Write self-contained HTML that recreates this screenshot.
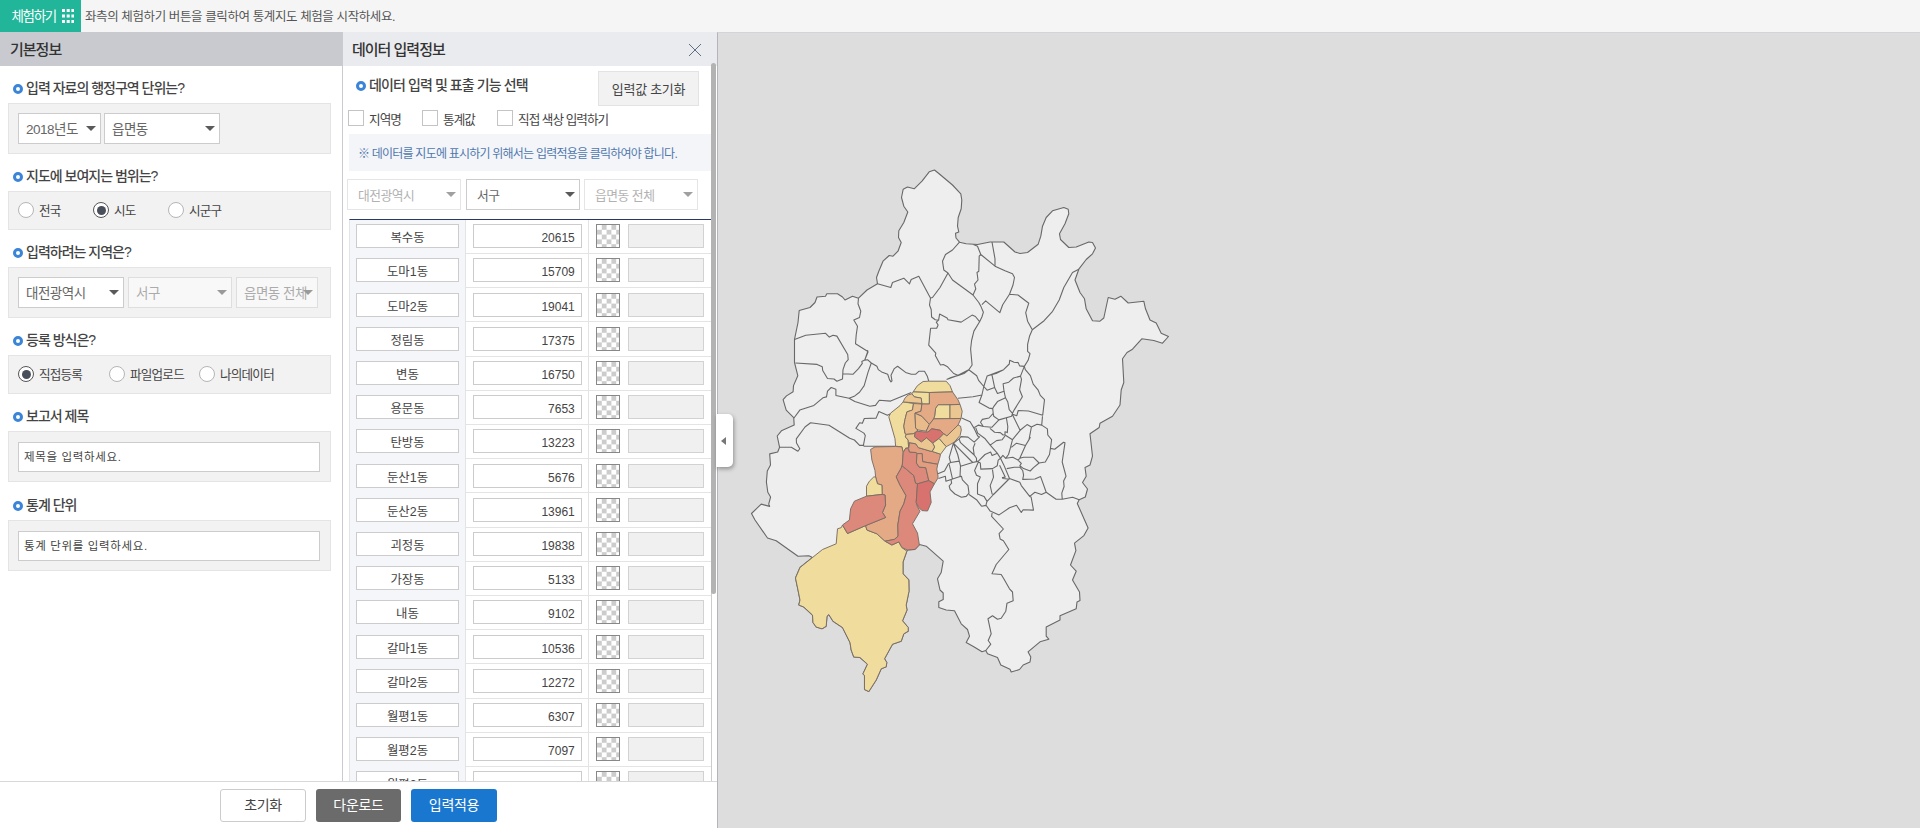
<!DOCTYPE html>
<html lang="ko">
<head>
<meta charset="utf-8">
<title>통계지도 체험</title>
<style>
*{box-sizing:border-box;margin:0;padding:0}
html,body{width:1920px;height:828px;overflow:hidden;background:#dddddd;font-family:"Liberation Sans","Noto Sans CJK KR",sans-serif;color:#333;font-size:12px}
#top{position:absolute;left:0;top:0;width:1920px;height:32px;background:#f5f5f5}
#top .btn{position:absolute;left:0;top:0;width:81px;height:32px;background:#21b69a;color:#fff;font-size:13.5px;line-height:34px;padding-left:11.5px;letter-spacing:-1.3px}
#top .grid{position:absolute;left:62px;top:9px;width:12px;height:14px}
#top .msg{position:absolute;left:85px;top:0;line-height:35px;font-size:12.5px;color:#555;letter-spacing:-0.4px}
#left{position:absolute;left:0;top:32px;width:343px;height:796px;background:#fff;border-right:1px solid #c9cbd0}
#left h2{height:34px;background:#c8cad0;font-size:15px;font-weight:500;line-height:35px;padding-left:10px;color:#333;letter-spacing:-1px}
.sec{position:absolute;left:0;width:342px}
.sec .tt{position:absolute;left:13px;top:0;font-size:14px;font-weight:500;color:#444;letter-spacing:-1px;white-space:nowrap;line-height:20px;padding-left:13px}
.sec .tt:before{content:"";position:absolute;left:0;top:6px;width:10px;height:10px;border:3px solid #3b84d8;border-radius:50%}
.box{position:absolute;left:8px;width:323px;background:#f2f2f2;border:1px solid #e4e4e4}
.sel{position:absolute;height:31px;background:#fff;border:1px solid #ccc;font-size:13.5px;color:#666;line-height:31px;padding-left:7px;white-space:nowrap;letter-spacing:-0.5px}
.sel:after{content:"";position:absolute;right:4.5px;top:12px;border-left:5px solid transparent;border-right:5px solid transparent;border-top:5.5px solid #5a5a5a}
.sel.dis{opacity:.5}
.sel.dis:after{border-top-color:#444}
.rad{position:absolute;font-size:12.6px;color:#444;line-height:19px;padding-left:21px;white-space:nowrap;letter-spacing:-0.8px}
.rad:before{content:"";position:absolute;left:0;top:0;width:16px;height:16px;border:1px solid #b5b5b5;border-radius:50%;background:#fff}
.rad.on:before{border-color:#555}
.rad.on:after{content:"";position:absolute;left:3.5px;top:3.5px;width:9px;height:9px;border-radius:50%;background:#4a4f5c}
.inp{position:absolute;left:9px;top:10px;width:302px;height:30px;background:#fff;border:1px solid #ccc;font-size:11.5px;color:#444;line-height:29px;padding-left:5px;letter-spacing:0.65px}
#foot{position:absolute;left:0;top:781px;width:717px;height:47px;background:#fff;border-top:1px solid #d6d8dc}
.fb{position:absolute;top:7.3px;height:33px;border-radius:3px;font-size:14px;line-height:33.5px;text-align:center;letter-spacing:-0.3px}
#data{position:absolute;left:343px;top:32px;width:374px;height:749px;background:#fff;overflow:hidden}
#map{position:absolute;left:717px;top:32px;width:1203px;height:796px;background:#dddddd;border-left:1px solid #b4b4bc;border-top:1px solid #d2d4da}

*:before,*:after{box-sizing:border-box}
#data .hd{position:absolute;left:0;top:0;width:374px;height:34px;background:#eaebef;font-size:15px;font-weight:500;line-height:35px;padding-left:9px;letter-spacing:-1px;color:#333}
#data .x{position:absolute;left:345px;top:11px;width:14px;height:14px}
#data .sb{position:absolute;left:368px;top:31px;width:5px;height:531px;background:#b3b3b3;border-radius:2.5px}
#data .tt{position:absolute;left:13px;top:43px;font-size:14px;font-weight:500;color:#444;letter-spacing:-0.9px;white-space:nowrap;line-height:20px;padding-left:13px}
#data .tt:before{content:"";position:absolute;left:0;top:6px;width:10px;height:10px;border:3px solid #3b84d8;border-radius:50%}
#data .rst{position:absolute;left:255px;top:39px;width:101px;height:35px;background:#f2f2f2;border:1px solid #e3e3e3;font-size:13px;line-height:36.5px;text-align:center;color:#444;letter-spacing:-0.3px}
.chk{position:absolute;top:78px;font-size:12.6px;line-height:20px;padding-left:21px;color:#444;white-space:nowrap;letter-spacing:-0.95px}
.chk:before{content:"";position:absolute;left:0;top:0;width:16px;height:16px;border:1px solid #c4c4c4;background:#fff}
#data .note{position:absolute;left:6px;top:102px;width:362px;height:37px;background:#f4f5f9;font-size:12px;line-height:40px;padding-left:9px;color:#4f78ad;letter-spacing:-0.78px;white-space:nowrap}
#data .tb{position:absolute;left:6px;top:187px;width:363px;height:600px;border-top:1px solid #2a3a66;border-left:1px solid #e4e4e4;border-right:1px solid #ccc}
.row{position:absolute;left:6px;width:362px;height:34.2px;border-bottom:1px solid #e4e4e4}
.row .c1{position:absolute;left:0;top:0;width:117.4px;height:34.2px;background:#f5f6f9;border-right:1px solid #e4e4e4;border-left:1px solid #e4e4e4}
.row .nm{position:absolute;left:6px;top:4.4px;width:103px;height:24px;background:#fff;border:1px solid #ccc;font-size:12.4px;line-height:26px;text-align:center;color:#444}
.row .vl{position:absolute;left:124.3px;top:4.4px;width:108.5px;height:24px;background:#fff;border:1px solid #ccc;font-size:12px;line-height:26px;text-align:right;padding-right:6px;color:#444}
.row:after{content:"";position:absolute;left:239px;top:0;width:1px;height:34.2px;background:#e4e4e4}
.row .sw{position:absolute;left:247px;top:4.4px;width:24px;height:24px;border:1px solid #888;background:repeating-conic-gradient(#ccc 0% 25%,#fff 0% 50%) 0 0/9.6px 9.6px}
.row .cl{position:absolute;left:279px;top:4.4px;width:76px;height:24px;background:#f0f0f0;border:1px solid #d2d2d2}
#hand{position:absolute;left:716px;top:414px;width:17px;height:53px;background:#fff;border-radius:0 5px 5px 0;box-shadow:1px 2px 4px rgba(0,0,0,.35)}
#hand:after{content:"";position:absolute;left:5px;top:23px;border-top:4px solid transparent;border-bottom:4px solid transparent;border-right:5px solid #777}
</style>
</head>
<body>
<div id="map"></div>
<!--MAP--><svg id="mapsvg" width="1920" height="828" viewBox="0 0 1920 828" style="position:absolute;left:0;top:0">
<path d="M934.5 170.0 L940.0 174.5 L952.5 185.0 L960.8 193.8 L961.8 200.0 L961.2 208.8 L958.2 217.5 L957.5 226.2 L958.8 232.0 L955.5 233.2 L956.0 238.0 L959.5 242.2 L966.2 243.8 L977.5 244.5 L990.0 242.0 L1003.8 242.0 L1010.0 247.5 L1015.0 252.0 L1020.0 253.5 L1027.5 252.5 L1038.2 244.2 L1040.8 236.2 L1042.5 226.2 L1046.2 217.5 L1052.5 210.8 L1063.8 207.5 L1068.2 209.2 L1068.8 213.8 L1065.0 223.8 L1059.5 233.8 L1060.5 239.5 L1068.8 247.5 L1076.2 247.0 L1088.8 242.0 L1092.5 242.5 L1095.5 248.0 L1092.5 253.8 L1086.2 259.5 L1078.8 269.2 L1075.0 280.0 L1080.0 292.5 L1084.5 298.8 L1086.2 308.8 L1092.5 320.8 L1100.0 321.2 L1103.8 318.0 L1108.2 297.5 L1115.0 299.2 L1120.8 296.2 L1128.2 303.0 L1143.8 301.2 L1145.5 308.8 L1150.0 320.0 L1156.2 323.0 L1161.2 333.2 L1168.5 336.5 L1162.5 343.2 L1153.8 340.5 L1141.8 338.8 L1132.5 349.2 L1127.0 352.5 L1122.5 358.8 L1123.8 382.5 L1121.2 390.0 L1120.0 405.0 L1112.5 416.2 L1100.0 423.2 L1099.2 427.5 L1090.0 433.8 L1092.5 456.2 L1090.0 465.0 L1085.0 467.5 L1086.2 476.2 L1082.5 482.5 L1087.5 489.0 L1085.3 497.0 L1079.2 499.8 L1077.3 503.5 L1088.1 528.0 L1083.9 535.6 L1074.5 543.1 L1075.9 550.6 L1070.5 565.0 L1076.2 571.2 L1072.5 580.0 L1079.5 592.0 L1080.0 600.5 L1077.0 602.0 L1076.2 608.8 L1060.0 615.8 L1060.0 620.0 L1046.2 627.0 L1046.2 636.2 L1048.8 639.2 L1040.0 641.8 L1028.0 651.8 L1030.8 657.0 L1030.0 662.0 L1023.2 665.0 L1019.5 669.5 L1011.2 672.0 L1010.0 669.2 L1000.8 665.0 L997.5 657.5 L987.5 653.8 L985.8 650.5 L982.0 651.8 L973.8 646.8 L966.2 642.5 L969.5 636.2 L967.5 629.5 L961.2 623.8 L954.5 610.8 L946.2 610.0 L938.8 607.5 L938.8 601.8 L943.2 599.5 L943.2 593.0 L940.0 590.0 L937.5 578.8 L941.2 572.5 L943.2 561.2 L926.2 546.2 L919.5 544.5 L915.0 549.4 L907.5 550.0 L906.8 551.2 L903.0 562.0 L903.0 573.8 L908.8 580.0 L909.0 591.2 L906.2 605.0 L907.0 610.0 L902.5 620.8 L908.2 627.5 L908.2 631.2 L903.8 633.8 L901.2 641.2 L892.5 644.2 L884.5 658.8 L886.8 662.5 L886.2 666.8 L881.2 668.8 L876.2 680.0 L868.8 691.5 L864.5 689.5 L864.5 675.5 L863.0 673.8 L867.5 664.2 L860.0 657.5 L853.8 657.0 L851.2 650.0 L850.0 642.5 L842.5 627.5 L833.0 621.2 L828.8 614.5 L827.0 616.2 L826.2 626.2 L822.0 628.8 L816.2 627.0 L813.0 622.5 L812.5 615.0 L803.8 607.0 L798.8 605.0 L800.0 600.0 L798.0 590.0 L795.5 578.0 L800.0 567.5 L812.5 557.5 L808.8 555.8 L798.0 556.2 L776.2 540.8 L767.5 538.0 L755.0 520.0 L751.5 513.5 L761.2 504.1 L769.7 506.4 L768.7 504.1 L770.6 497.0 L767.8 492.3 L766.4 482.0 L767.3 471.0 L770.5 465.0 L769.7 453.9 L777.7 452.0 L779.6 447.3 L777.2 436.0 L781.4 430.8 L794.2 425.1 L793.7 417.6 L786.2 410.1 L783.1 399.7 L786.5 395.9 L793.1 391.7 L793.5 385.6 L797.8 375.7 L794.5 362.5 L794.5 339.4 L798.0 322.5 L799.2 310.5 L810.0 307.5 L815.0 302.5 L817.0 297.0 L825.5 296.2 L826.8 293.8 L837.5 293.8 L842.5 297.0 L845.0 300.0 L852.5 296.2 L858.5 298.2 L867.0 290.0 L877.5 283.8 L876.5 277.5 L878.8 271.2 L883.0 261.2 L889.2 255.5 L893.0 256.2 L898.0 251.2 L901.2 242.5 L898.5 237.5 L898.8 230.8 L903.8 222.5 L907.8 212.0 L903.8 206.2 L901.5 197.5 L903.2 189.2 L907.5 187.0 L914.2 188.8 L922.0 181.2 L929.2 171.8 Z" fill="#eeeeee" stroke="#686868" stroke-width="1.1" stroke-linejoin="round"/>
<path d="M959.5 242.2 L952.5 250.0 L945.5 254.5 L942.5 261.2 L943.8 270.0 L948.0 273.0 L940.0 287.5 L932.5 297.5 L930.5 298.0 M877.5 283.8 L890.8 287.5 L892.5 282.5 L903.8 278.2 L909.5 283.8 L911.2 279.5 L918.8 276.2 L928.8 295.0 L930.5 298.0 M948.0 273.0 L952.5 280.0 L966.2 290.0 L973.0 295.0 L978.8 302.5 L981.0 306.6 L983.4 312.2 L981.9 317.0 L979.6 321.7 L973.9 331.1 L971.6 340.5 L970.6 349.0 L972.1 365.0 L968.8 369.7 L964.0 373.5 L958.4 375.4 L951.0 377.5 L946.6 379.4 M973.5 244.5 L977.5 246.2 L980.8 254.5 L979.2 256.2 L978.8 271.2 L977.0 272.5 L978.0 280.0 L974.5 284.2 L975.8 288.8 L973.0 295.0 M980.8 254.5 L995.0 266.2 L1005.0 270.8 L1012.5 273.8 L1014.5 277.5 L1013.0 285.0 L1009.5 294.2 L1002.7 304.7 L999.8 312.7 L985.7 300.9 L981.9 304.7 M992.0 242.0 L995.0 258.8 L995.0 266.2 M1009.5 294.2 L1018.0 295.0 L1028.8 303.2 L1025.7 312.7 L1027.6 321.2 L1032.3 329.7 L1029.5 336.3 L1027.6 344.3 L1027.6 351.3 L1030.0 353.7 L1028.1 360.3 L1024.3 366.4 L1019.6 365.9 L1018.2 362.6 L1014.0 362.2 L1009.7 360.3 L1009.3 364.0 L1003.6 369.7 L996.1 373.5 L990.4 374.9 L987.1 376.1 M1032.3 329.7 L1044.1 320.7 L1052.6 311.3 L1059.2 300.0 L1063.8 287.5 L1072.5 272.5 L1078.8 269.2 M858.5 298.2 L858.0 303.8 L860.8 311.2 L859.5 317.5 L853.8 320.0 L857.5 326.2 L856.2 335.0 L855.5 343.8 L867.5 351.2 L867.5 352.1 L864.7 360.1 M930.5 298.0 L929.5 305.0 L931.2 309.5 L931.6 317.0 L935.3 319.8 L938.6 320.2 L939.6 314.1 L947.1 317.9 L948.0 319.8 L961.2 322.1 L972.1 315.1 L975.4 316.5 L979.6 321.7 M938.6 320.2 L936.3 322.1 L938.1 325.0 L936.7 328.3 L930.6 328.3 L928.7 345.2 L935.8 353.2 L935.3 355.6 L940.5 365.0 L943.3 364.5 L947.1 366.4 L953.7 373.5 L958.4 375.4 M794.5 339.4 L805.8 335.2 L825.6 333.3 L829.3 337.1 L833.1 335.2 L836.9 336.1 L847.7 354.5 L848.2 359.7 L845.3 363.0 L843.0 369.6 L842.5 379.0 L836.9 381.3 L834.0 379.0 L827.5 378.5 L822.7 370.5 L822.3 366.7 L817.1 364.4 L795.4 363.0 M843.0 373.8 L852.9 374.3 L858.5 368.6 L862.3 363.4 L861.8 361.6 L864.7 360.1 L868.0 352.1 L867.5 350.2 M864.7 360.1 L867.5 359.7 L871.3 363.0 L876.9 366.3 L878.3 369.6 L881.6 371.9 L887.7 374.3 L889.6 379.9 L891.0 381.8 L892.0 380.9 L891.0 375.2 L894.3 368.6 L897.6 366.3 L905.6 372.4 L911.3 374.3 L915.5 374.3 L918.8 371.3 L924.5 371.3 L927.3 376.2 L928.7 381.0 M871.3 363.0 L868.0 372.4 L864.2 385.6 L859.5 392.2 L854.8 395.9 L849.1 398.3 M794.0 418.0 L799.8 410.1 L813.9 405.4 L822.9 397.8 L826.5 396.9 L827.5 391.2 L831.2 387.5 L835.9 389.3 L835.9 395.5 L849.1 398.3 L854.8 401.6 L869.8 406.3 L875.5 405.4 L879.3 400.2 L890.6 401.1 L911.3 392.6 M779.6 447.3 L791.3 447.3 L797.9 451.3 L799.8 448.7 L796.5 443.0 L796.3 438.8 L805.0 427.0 L810.6 422.8 L829.0 425.3 L849.7 438.3 L854.4 440.0 L859.6 445.4 L863.4 445.4 L864.3 446.3 L895.4 446.3 M863.4 445.4 L865.3 435.5 L863.9 433.1 L855.9 428.4 L859.6 422.8 L862.4 423.3 L864.3 418.5 L876.1 418.1 L878.9 411.5 L887.4 415.2 L890.0 414.0 M946.6 379.4 L957.0 375.7 L968.8 369.7 M968.8 369.7 L976.7 375.7 L978.6 380.4 L983.8 386.5 L981.9 395.0 L979.1 402.5 L989.0 408.1 L992.7 408.6 L993.2 413.3 L993.7 416.2 L998.9 419.9 L991.8 427.3 L983.3 426.5 L980.5 422.3 L982.4 419.4 L989.0 418.0 L993.2 413.3 M957.9 398.3 L973.0 396.8 L981.9 395.0 M983.8 386.5 L987.1 376.1 L991.8 374.2 L1003.6 369.7 M991.8 374.2 L994.6 387.4 L987.1 390.2 L983.8 386.5 M994.6 387.4 L997.5 393.5 L1004.0 391.2 L1003.1 383.7 L1008.8 382.2 L1013.5 378.0 L1020.5 376.1 L1024.3 366.4 M1004.0 391.2 L1005.5 397.8 L997.5 401.6 L993.7 406.7 L992.7 408.6 M1005.5 397.8 L1007.8 402.0 L1009.2 409.6 L1012.5 413.3 L1011.6 416.2 L998.9 419.9 M1020.5 376.1 L1021.5 379.4 L1019.6 389.8 L1022.4 396.8 L1014.4 409.6 L1012.5 413.3 M1024.3 366.4 L1025.3 369.7 L1030.4 375.7 L1033.2 384.1 L1038.0 389.8 L1040.3 395.4 L1044.5 399.7 L1042.7 415.2 L1028.5 411.0 L1018.2 410.5 L1016.8 415.7 L1012.5 414.2 M1042.5 416.2 L1041.7 425.1 L1047.4 428.9 L1047.8 435.0 L1051.6 439.7 L1050.9 445.0 L1049.5 454.5 L1045.3 462.0 L1039.1 463.0 M1041.7 425.1 L1037.0 424.2 L1031.4 427.0 L1027.1 424.6 L1020.1 430.3 L1012.5 439.7 L1010.4 447.9 L1008.5 454.5 L1005.7 458.3 L1002.9 455.4 L1000.5 458.3 M1012.5 414.7 L1020.1 430.3 M1006.4 418.0 L1007.8 426.5 L1007.3 432.6 L1005.0 431.7 L1005.0 435.0 L1012.5 439.7 M1031.4 427.0 L1029.0 439.7 L1025.5 445.5 L1016.5 443.2 L1011.4 447.4 M961.7 418.0 L970.1 421.8 L974.4 428.9 L977.7 435.9 L979.6 436.9 L974.2 442.2 L968.0 437.1 L961.0 436.6 L959.1 438.9 L953.4 443.2 M974.4 427.5 L978.6 425.1 L983.3 426.5 M975.8 427.9 L977.7 433.1 L985.2 438.8 L990.2 445.1 L997.2 453.1 L1000.5 458.3 L1003.8 464.9 L1009.5 478.5 L993.5 494.5 L986.9 501.6 L985.9 505.4 L981.7 506.3 M989.9 428.4 L994.6 432.2 L1000.3 432.6 L1003.1 435.0 L1005.0 435.0 M1005.0 436.0 L1002.2 439.7 L996.5 440.6 L990.2 445.1 M953.4 443.2 L949.2 457.3 L950.6 462.5 L948.3 463.9 L944.5 471.0 L937.9 473.8 M953.4 443.2 L957.7 454.5 L960.5 465.8 L960.0 476.6 L945.9 481.3 L945.4 476.2 L938.4 478.5 M950.6 462.5 L959.1 461.1 M949.2 464.4 L952.5 479.0 M953.4 443.2 L972.7 462.5 L976.5 461.6 L976.5 458.3 L974.2 455.0 L973.2 447.9 L975.1 443.2 M959.1 438.9 L960.5 442.7 L974.2 455.0 M972.7 462.5 L960.5 466.3 M1050.5 448.4 L1054.7 449.3 L1063.6 442.2 L1065.0 442.7 L1062.2 462.0 L1066.0 476.2 L1063.6 480.9 L1064.1 486.5 L1061.8 493.1 L1062.2 498.8 M976.5 461.6 L978.4 461.1 L985.0 454.5 L990.6 452.1 L992.1 455.4 L996.8 453.5 M978.4 462.0 L980.3 463.0 L980.8 469.1 L992.5 468.6 L997.2 465.8 L998.2 460.1 L1000.5 458.3 M978.4 462.0 L974.6 470.5 L976.5 475.2 L980.3 477.1 L977.5 483.7 L977.5 494.0 L984.0 496.4 L986.9 501.1 M992.5 469.6 L993.5 477.1 L990.2 485.6 L992.1 494.0 L993.5 494.5 M999.6 465.3 L1005.2 477.1 L1002.4 477.6 L1002.9 478.5 L1009.5 479.3 M1011.4 447.4 L1016.5 443.2 L1025.5 445.5 L1019.8 458.3 L1018.0 460.1 L1012.8 457.3 L1005.7 458.3 M1025.5 445.5 L1030.2 437.5 L1029.0 439.7 M1019.8 458.3 L1023.6 457.3 L1033.5 457.3 L1039.1 463.0 L1033.5 467.7 L1030.2 471.0 L1023.6 468.6 L1019.8 465.8 L1021.3 463.4 L1018.0 460.1 M1006.7 468.6 L1014.2 467.2 L1019.8 467.2 L1022.7 470.5 L1023.6 475.2 L1022.7 479.4 L1034.9 479.0 L1040.6 476.6 L1046.2 492.2 L1041.5 494.5 L1034.9 492.2 L1029.7 496.4 L1021.3 485.6 L1019.8 482.3 L1009.5 478.5 M1046.2 492.2 L1056.1 499.2 L1062.2 499.2 L1072.6 497.3 L1079.2 499.7 M1029.7 496.4 L1031.1 497.0 L1033.5 510.1 L1023.1 509.7 L1021.3 512.5 L1016.5 505.2 L1009.5 507.8 L999.1 514.9 L990.2 511.1 L985.9 505.0 M960.0 476.6 L961.4 476.2 L962.4 479.9 L968.0 485.6 L969.0 493.1 L966.2 496.4 L961.4 497.3 L954.9 494.0 L950.1 489.3 L949.2 486.0 L951.6 483.2 L951.1 479.9 M969.0 494.5 L976.5 499.7 L981.7 506.3 M992.1 513.0 L991.6 516.3 L1003.4 529.0 L999.1 533.7 L1000.1 538.9 L1003.4 540.8 L1008.8 549.5 L996.2 564.5 L992.0 573.8 L1001.2 574.5 L1003.8 578.8 L1009.5 588.8 L1012.5 592.0 L1013.2 600.8 L1007.0 603.2 L1005.8 611.2 L1001.2 618.2 L997.5 619.2 L992.5 615.8 L988.0 618.8 L991.2 633.8 L988.2 640.5 L990.8 644.2 L985.8 650.5" fill="none" stroke="#686868" stroke-width="1.1" stroke-linejoin="round"/>
<g stroke="#7a6e64" stroke-width="0.95" stroke-linejoin="miter">
<path d="M837.5 528.8 L836.2 543.8 L822.5 549.5 L812.5 557.5 L800.0 567.5 L795.5 578.0 L798.0 590.0 L800.0 600.0 L798.8 605.0 L803.8 607.0 L812.5 615.0 L813.0 622.5 L816.2 627.0 L822.0 628.8 L826.2 626.2 L827.0 616.2 L828.8 614.5 L833.0 621.2 L842.5 627.5 L850.0 642.5 L851.2 650.0 L853.8 657.0 L860.0 657.5 L867.5 664.2 L863.0 673.8 L864.5 675.5 L864.5 689.5 L868.8 691.5 L876.2 680.0 L881.2 668.8 L886.2 666.8 L886.8 662.5 L884.5 658.8 L892.5 644.2 L901.2 641.2 L903.8 633.8 L908.2 631.2 L908.2 627.5 L902.5 620.8 L907.0 610.0 L906.2 605.0 L909.0 591.2 L908.8 580.0 L903.0 573.8 L903.0 562.0 L906.8 551.2 L901.9 547.5 L898.8 541.9 L891.9 545.0 L885.0 541.2 L876.9 533.8 L866.9 530.0 L865.6 525.6 L847.5 533.5 L842.5 525.0 L841.3 527.6 Z" fill="#f0dc9c"/>
<path d="M903.1 401.9 L913.5 403.5 L912.5 410.0 L906.9 411.9 L905.0 419.4 L903.8 426.2 L905.0 433.1 L906.2 435.0 L905.4 436.9 L908.2 440.1 L908.6 447.5 L905.7 448.2 L903.2 452.6 L901.9 446.9 L895.6 446.2 L895.0 438.8 L888.8 416.9 L890.6 413.1 L900.0 405.6 Z" fill="#f0dc9c"/>
<path d="M870.6 449.4 L875.0 446.9 L895.6 446.5 L901.9 446.9 L903.2 452.6 L902.3 465.2 L901.2 468.1 L896.2 476.9 L900.0 485.0 L906.0 495.6 L903.8 503.8 L900.0 511.2 L897.8 525.0 L898.1 536.2 L894.4 539.4 L885.0 541.2 L876.9 533.8 L866.9 530.0 L865.6 525.6 L885.6 517.5 L882.5 512.5 L885.6 505.0 L885.0 495.0 L882.2 494.4 L881.9 485.0 L877.5 483.8 L875.6 476.9 L875.0 470.6 L871.9 460.0 Z" fill="#e4aa86"/>
<path d="M873.8 476.9 L875.6 476.9 L877.5 483.8 L881.9 485.0 L882.2 494.4 L866.5 496.2 L866.5 486.2 L869.4 481.2 Z" fill="#f0dc9c"/>
<path d="M885.0 495.0 L885.6 505.0 L882.5 512.5 L885.6 517.5 L865.6 525.6 L847.5 533.5 L842.5 525.0 L849.4 520.0 L850.6 508.8 L854.4 501.2 L866.5 496.2 L882.2 494.4 Z" fill="#dc887a"/>
<path d="M901.9 465.6 L901.2 468.1 L896.2 476.9 L900.0 485.0 L906.0 495.6 L903.8 503.8 L900.0 511.2 L897.8 525.0 L898.1 536.2 L894.4 539.4 L885.0 541.2 L891.9 545.0 L898.8 541.9 L901.9 547.5 L907.5 550.0 L915.0 549.4 L919.4 545.0 L917.5 533.1 L912.5 523.8 L920.0 511.2 L917.5 506.9 L916.2 502.5 L917.5 483.8 L915.6 483.1 L913.8 475.6 L906.3 469.2 Z" fill="#dc887a"/>
<path d="M903.2 452.6 L905.7 448.2 L908.6 448.9 L909.5 452.0 L916.4 452.6 L917.0 453.6 L916.4 463.0 L919.2 467.1 L925.8 467.7 L928.8 480.6 L917.5 483.8 L915.6 483.1 L913.8 475.6 L906.3 469.2 L901.9 465.6 L902.3 465.2 Z" fill="#dc887a"/>
<path d="M909.2 442.6 L915.8 443.8 L918.3 447.6 L930.2 451.1 L932.1 451.4 L940.6 454.2 L939.6 458.3 L937.8 464.3 L922.7 461.7 L922.1 453.6 L917.0 453.6 L916.4 452.6 L909.5 452.0 L908.6 448.9 Z" fill="#e29c80"/>
<path d="M917.0 453.6 L922.1 453.6 L922.7 461.7 L937.8 464.3 L936.8 469.0 L938.1 476.9 L937.5 478.8 L934.4 483.8 L928.8 480.6 L925.8 467.7 L919.2 467.1 L916.4 463.0 Z" fill="#e29c80"/>
<path d="M917.5 483.8 L928.8 480.6 L934.4 483.8 L930.0 491.9 L931.2 502.5 L927.5 511.0 L921.9 510.6 L918.8 507.5 L916.2 502.5 Z" fill="#d8726e"/>
<path d="M913.1 391.9 L917.5 385.6 L923.1 381.5 L928.8 381.2 L946.2 381.2 L950.0 385.6 L952.5 391.9 L929.4 392.5 Z" fill="#f0dc9c"/>
<path d="M911.9 393.8 L913.1 391.9 L929.4 392.5 L929.4 404.0 L921.9 404.0 L921.2 398.1 L914.4 396.9 Z" fill="#f0dc9c"/>
<path d="M911.9 393.8 L914.4 396.9 L921.2 398.1 L921.9 403.5 L903.1 401.9 L905.0 398.1 L908.1 395.0 Z" fill="#ebc690"/>
<path d="M913.5 403.5 L921.9 404.0 L921.0 411.2 L915.0 413.1 L915.6 428.1 L918.1 430.0 L915.0 432.5 L913.1 433.8 L906.2 434.4 L905.0 433.1 L903.8 426.2 L905.0 419.4 L906.9 411.9 L912.5 410.0 Z" fill="#e9bb8a"/>
<path d="M915.0 413.1 L921.9 416.2 L929.4 424.4 L926.2 431.2 L918.1 430.0 L915.6 428.1 Z" fill="#e9bb8a"/>
<path d="M929.4 392.5 L952.5 391.9 L958.1 400.0 L960.0 404.4 L938.1 404.8 L935.6 408.5 L935.0 415.0 L933.8 418.8 L929.4 424.4 L921.9 416.2 L915.0 413.1 L921.0 411.2 L921.9 404.0 L929.4 404.0 Z" fill="#e4aa86"/>
<path d="M938.1 404.8 L950.0 404.8 L950.0 418.8 L933.8 418.8 L935.0 415.0 L935.6 408.5 Z" fill="#f0dc9c"/>
<path d="M950.0 404.8 L960.0 404.4 L962.2 411.2 L961.0 418.5 L950.0 418.8 Z" fill="#ebc690"/>
<path d="M933.8 418.8 L961.0 418.5 L958.1 425.0 L946.9 436.0 L943.7 433.8 L940.3 430.3 L931.8 428.8 L927.7 432.2 L926.2 431.2 L929.4 424.4 Z" fill="#e4aa86"/>
<path d="M914.8 433.2 L917.0 431.3 L927.7 432.2 L931.8 428.8 L940.3 430.3 L943.7 433.8 L939.0 438.5 L932.7 443.2 L926.5 437.9 L921.4 442.0 L914.5 436.9 Z" fill="#d8726e"/>
<path d="M958.1 425.0 L960.6 426.2 L961.3 430.0 L960.1 435.4 L954.1 442.3 L946.2 446.7 L939.0 438.5 L943.7 433.8 L946.9 436.0 Z" fill="#ebc690"/>
<path d="M932.7 443.2 L939.0 438.5 L946.2 446.7 L940.6 454.2 L932.1 451.4 L934.6 447.0 Z" fill="#f0dc9c"/>
<path d="M906.2 434.4 L913.1 433.8 L914.8 433.2 L914.5 436.9 L921.4 442.0 L926.5 437.9 L932.7 443.2 L934.6 447.0 L932.1 451.4 L930.2 451.1 L918.3 447.6 L915.8 443.8 L909.2 442.6 L908.6 447.5 L908.2 440.1 L905.4 436.9 Z" fill="#ebc690"/>
</g></svg><!--/MAP-->
<div id="top">
  <div class="btn">체험하기</div>
  <svg class="grid" viewBox="0 0 12 14"><g fill="#fff"><rect x="0" y="0" width="3" height="3"/><rect x="4.7" y="0" width="3" height="3"/><rect x="9.4" y="0" width="2.6" height="3"/><rect x="0" y="5.5" width="3" height="3"/><rect x="4.7" y="5.5" width="3" height="3"/><rect x="9.4" y="5.5" width="2.6" height="3"/><rect x="0" y="11" width="3" height="3"/><rect x="4.7" y="11" width="3" height="3"/><rect x="9.4" y="11" width="2.6" height="3"/></g></svg>
  <div class="msg">좌측의 체험하기 버튼을 클릭하여 통계지도 체험을 시작하세요.</div>
</div>
<div id="left">
  <h2>기본정보</h2>
  <div class="sec" style="top:46px"><div class="tt">입력 자료의 행정구역 단위는?</div>
    <div class="box" style="top:25px;height:51px">
      <div class="sel" style="left:9px;top:9px;width:83px">2018년도</div>
      <div class="sel" style="left:95px;top:9px;width:116px">읍면동</div>
    </div>
  </div>
  <div class="sec" style="top:134px"><div class="tt">지도에 보여지는 범위는?</div>
    <div class="box" style="top:25px;height:39px">
      <div class="rad" style="left:9px;top:10px">전국</div>
      <div class="rad on" style="left:84px;top:10px">시도</div>
      <div class="rad" style="left:159px;top:10px">시군구</div>
    </div>
  </div>
  <div class="sec" style="top:210px"><div class="tt">입력하려는 지역은?</div>
    <div class="box" style="top:25px;height:51px">
      <div class="sel" style="left:9px;top:9px;width:106px">대전광역시</div>
      <div class="sel dis" style="left:119px;top:9px;width:104px">서구</div>
      <div class="sel dis" style="left:227px;top:9px;width:82px">읍면동 전체</div>
    </div>
  </div>
  <div class="sec" style="top:298px"><div class="tt">등록 방식은?</div>
    <div class="box" style="top:25px;height:39px">
      <div class="rad on" style="left:9px;top:10px">직접등록</div>
      <div class="rad" style="left:100px;top:10px">파일업로드</div>
      <div class="rad" style="left:190px;top:10px">나의데이터</div>
    </div>
  </div>
  <div class="sec" style="top:374px"><div class="tt">보고서 제목</div>
    <div class="box" style="top:25px;height:51px"><div class="inp">제목을 입력하세요.</div></div>
  </div>
  <div class="sec" style="top:463px"><div class="tt">통계 단위</div>
    <div class="box" style="top:25px;height:51px"><div class="inp">통계 단위를 입력하세요.</div></div>
  </div>
</div>
<div id="data">
  <div class="hd">데이터 입력정보</div>
  <svg class="x" viewBox="0 0 14 14"><path d="M1 1L13 13M13 1L1 13" stroke="#56677f" stroke-width="0.95" fill="none"/></svg>
  <div class="tt">데이터 입력 및 표출 기능 선택</div>
  <div class="rst">입력값 초기화</div>
  <div class="chk" style="left:5px">지역명</div>
  <div class="chk" style="left:79px">통계값</div>
  <div class="chk" style="left:154px">직접 색상 입력하기</div>
  <div class="note">※ 데이터를 지도에 표시하기 위해서는 입력적용을 클릭하여야 합니다.</div>
  <div class="sel dis" style="left:4px;top:147px;width:114px;padding-left:10px;font-size:12.8px">대전광역시</div>
  <div class="sel" style="left:123px;top:147px;width:114px;padding-left:10px;font-size:12.8px">서구</div>
  <div class="sel dis" style="left:241px;top:147px;width:114px;padding-left:10px;font-size:12.8px">읍면동 전체</div>
  <div class="tb"></div>
<div class="row" style="top:187.8px"><div class="c1"><div class="nm">복수동</div></div><div class="vl">20615</div><div class="sw"></div><div class="cl"></div></div>
<div class="row" style="top:222.0px"><div class="c1"><div class="nm">도마1동</div></div><div class="vl">15709</div><div class="sw"></div><div class="cl"></div></div>
<div class="row" style="top:256.2px"><div class="c1"><div class="nm">도마2동</div></div><div class="vl">19041</div><div class="sw"></div><div class="cl"></div></div>
<div class="row" style="top:290.4px"><div class="c1"><div class="nm">정림동</div></div><div class="vl">17375</div><div class="sw"></div><div class="cl"></div></div>
<div class="row" style="top:324.6px"><div class="c1"><div class="nm">변동</div></div><div class="vl">16750</div><div class="sw"></div><div class="cl"></div></div>
<div class="row" style="top:358.8px"><div class="c1"><div class="nm">용문동</div></div><div class="vl">7653</div><div class="sw"></div><div class="cl"></div></div>
<div class="row" style="top:393.0px"><div class="c1"><div class="nm">탄방동</div></div><div class="vl">13223</div><div class="sw"></div><div class="cl"></div></div>
<div class="row" style="top:427.2px"><div class="c1"><div class="nm">둔산1동</div></div><div class="vl">5676</div><div class="sw"></div><div class="cl"></div></div>
<div class="row" style="top:461.4px"><div class="c1"><div class="nm">둔산2동</div></div><div class="vl">13961</div><div class="sw"></div><div class="cl"></div></div>
<div class="row" style="top:495.6px"><div class="c1"><div class="nm">괴정동</div></div><div class="vl">19838</div><div class="sw"></div><div class="cl"></div></div>
<div class="row" style="top:529.8px"><div class="c1"><div class="nm">가장동</div></div><div class="vl">5133</div><div class="sw"></div><div class="cl"></div></div>
<div class="row" style="top:564.0px"><div class="c1"><div class="nm">내동</div></div><div class="vl">9102</div><div class="sw"></div><div class="cl"></div></div>
<div class="row" style="top:598.2px"><div class="c1"><div class="nm">갈마1동</div></div><div class="vl">10536</div><div class="sw"></div><div class="cl"></div></div>
<div class="row" style="top:632.4px"><div class="c1"><div class="nm">갈마2동</div></div><div class="vl">12272</div><div class="sw"></div><div class="cl"></div></div>
<div class="row" style="top:666.6px"><div class="c1"><div class="nm">월평1동</div></div><div class="vl">6307</div><div class="sw"></div><div class="cl"></div></div>
<div class="row" style="top:700.8px"><div class="c1"><div class="nm">월평2동</div></div><div class="vl">7097</div><div class="sw"></div><div class="cl"></div></div>
<div class="row" style="top:735.0px"><div class="c1"><div class="nm">월평3동</div></div><div class="vl"></div><div class="sw"></div><div class="cl"></div></div>
  <div class="sb"></div>
</div>
<div id="foot">
  <div class="fb" style="left:220px;width:86px;background:#fff;border:1px solid #ccc;color:#444;line-height:31.5px">초기화</div>
  <div class="fb" style="left:316px;width:85px;background:#6b6b6b;color:#fff">다운로드</div>
  <div class="fb" style="left:411px;width:86px;background:#1a77cf;color:#fff">입력적용</div>
</div>
<div id="hand"></div>
</body>
</html>
